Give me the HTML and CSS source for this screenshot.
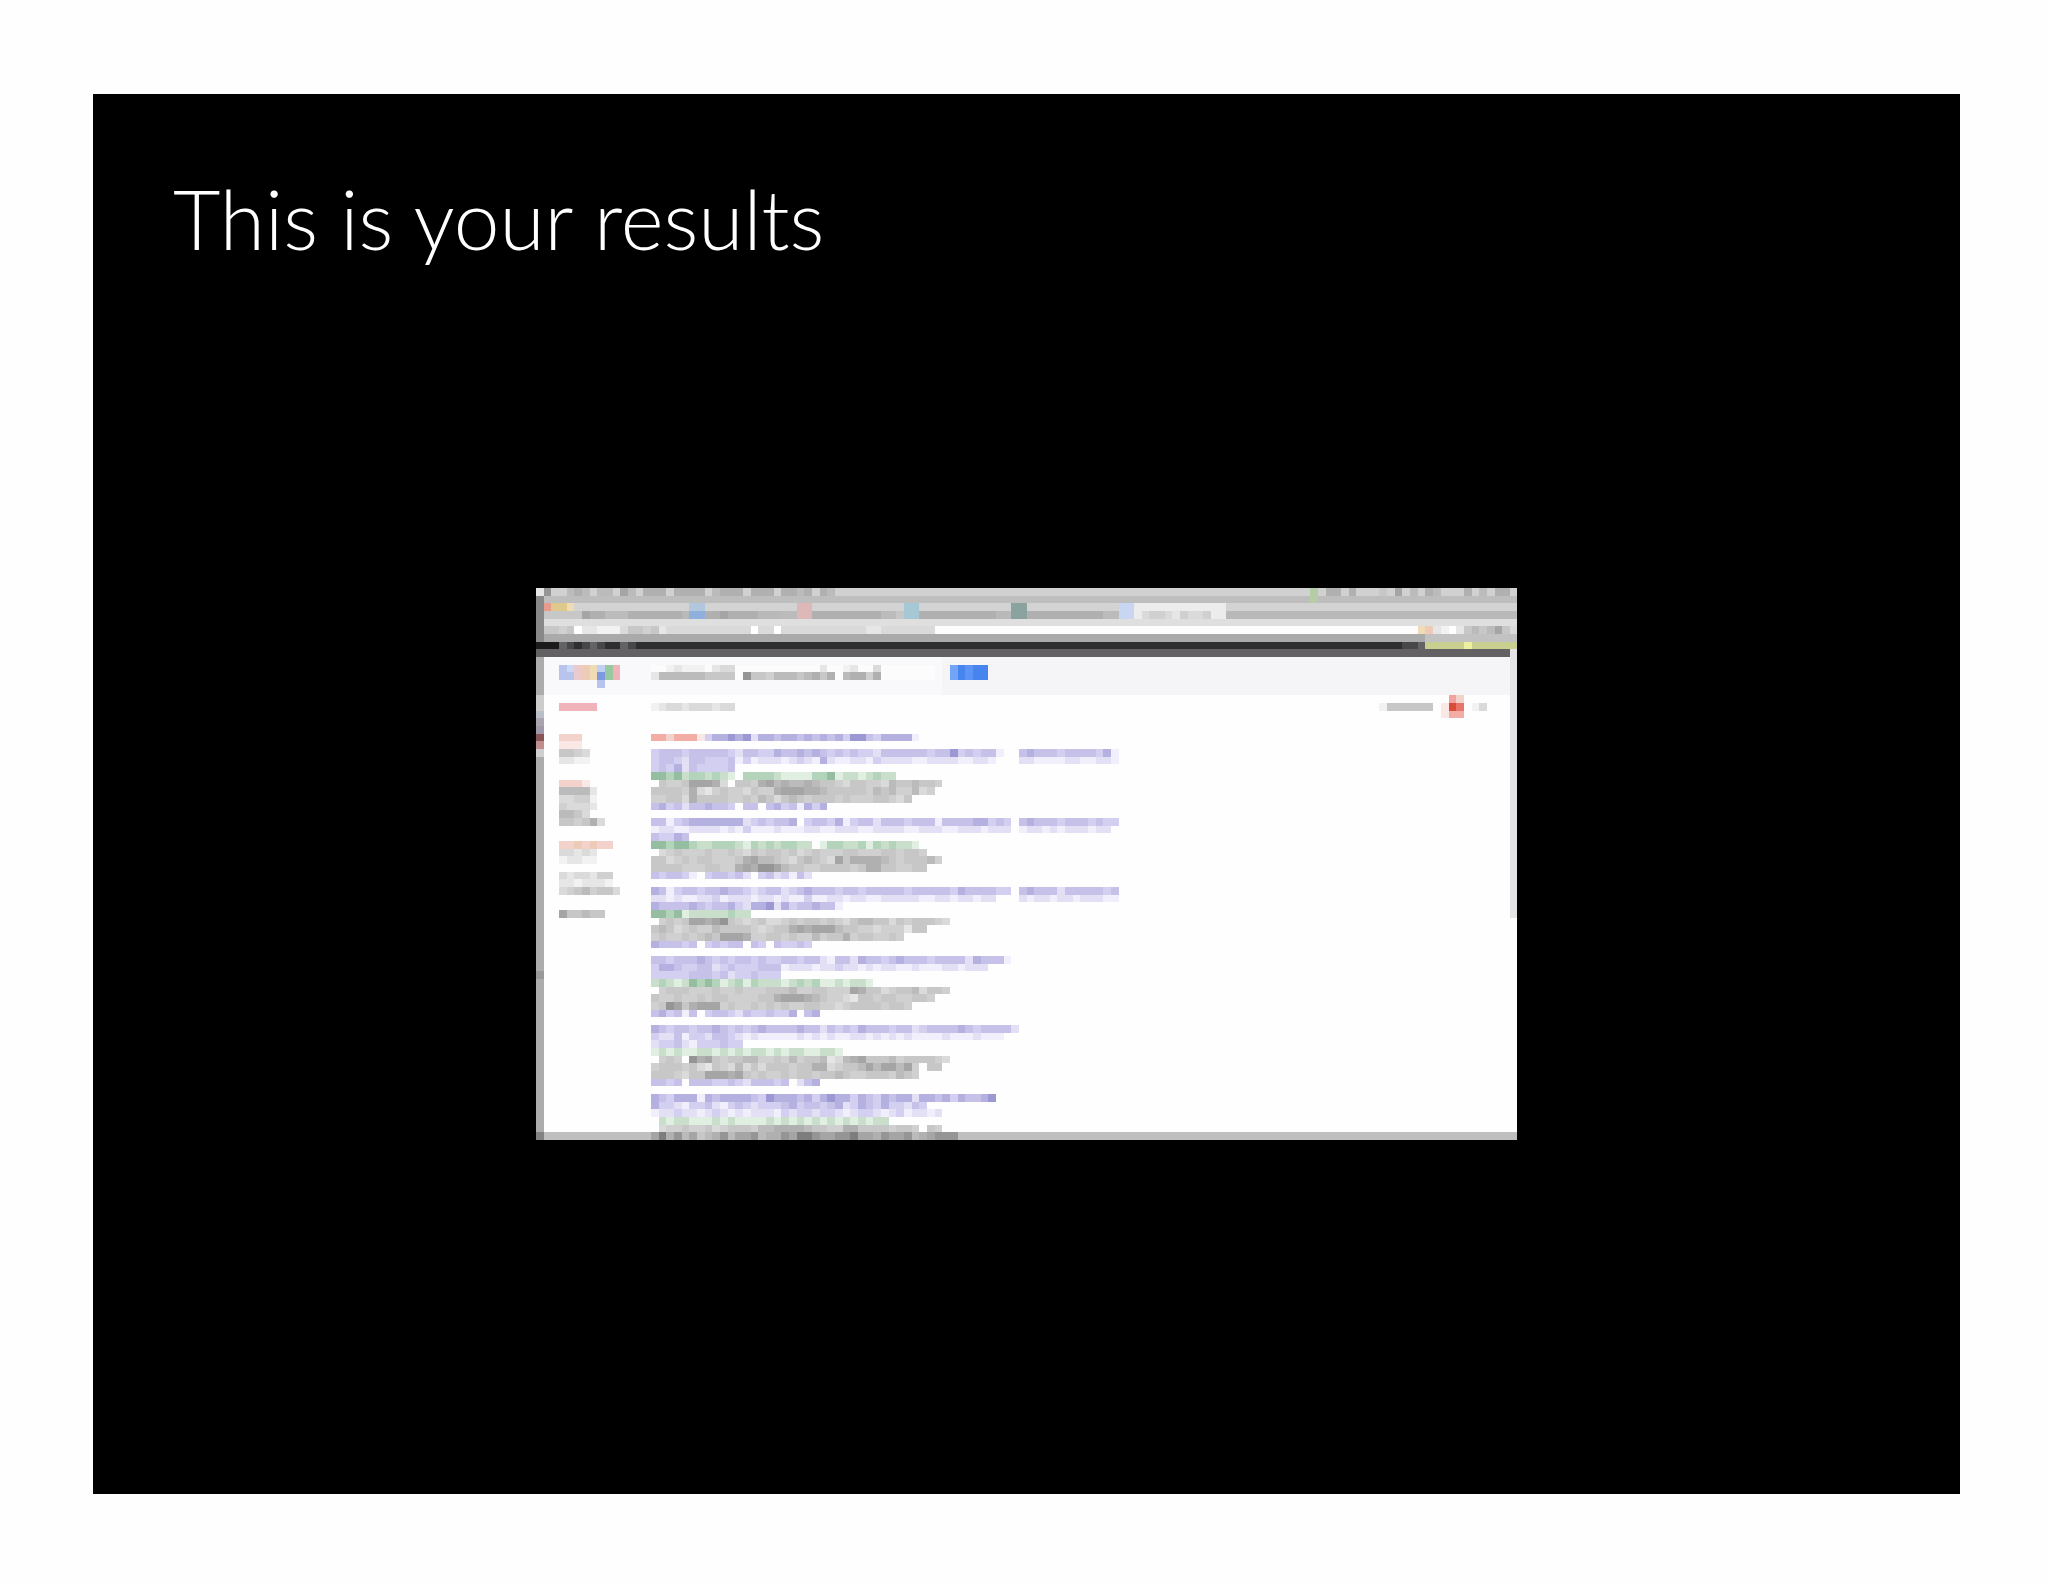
FILE: index.html
```
<!DOCTYPE html>
<html lang="en">
<head>
    <meta charset="UTF-8">
    <meta name="viewport" content="width=device-width, initial-scale=1.0">
    <title>This is your results</title>
    <link rel="stylesheet" href="styles.css">
</head>
<body>
    <main class="slide">
        <h1 class="slide-title">This is your results</h1>
        <svg id="thumb" class="thumb" viewBox="0 0 128 72" preserveAspectRatio="none" role="img" aria-label="Thumbnail of a search results page"></svg>
    </main>

    <script src="thumb.js"></script>
</body>
</html>
```
FILE: styles.css
```
body {
    margin: 0;
    padding: 94px 88px 88px 93px;
    background-color: #fefefe;
    font-family: Lato, "Open Sans", sans-serif;
}
.slide {
    display: flex;
    flex-direction: column;
    align-items: center;
    box-sizing: border-box;
    aspect-ratio: 4 / 3;
    padding: 80px;
    background-color: #000;
}
.slide-title {
    align-self: flex-start;
    margin: 0;
    color: white;
    font-size: 82px;
    font-weight: 300;
    line-height: 88px;
}
.thumb {
    display: block;
    width: 57.5%;
    aspect-ratio: 16 / 9;
    margin-top: 326px;
    shape-rendering: crispEdges;
}
```
FILE: thumb.js
```
const colors = {
    // greys, dark to light
    0: '#7d7d7d', 1: '#959595', 2: '#a5a5a5', 3: '#b0b0b0', 4: '#bbbbbb',
    5: '#c7c7c7', 6: '#d0d0d0', 7: '#dadada', 8: '#e6e6e6', 9: '#f2f2f2',
    // link purples
    a: '#9c98d4', b: '#b4b0e0', c: '#c5c1e8', d: '#d2cff0', e: '#e3e0f6', f: '#f1effb',
    // url greens
    g: '#94be9f', h: '#b3d3bb', i: '#c9dfcc', j: '#e1efe3',
    // reds
    r: '#f2aea4', s: '#f2d2cb', t: '#f9e8e5', p: '#f0b3ba', q: '#f3a39d', R: '#d94c3a', Q: '#e8746a',
    // logo and button
    u: '#b9c4ed', v: '#cad9f8', w: '#eacacc', x: '#eecbb6', y: '#f0dcb4', z: '#7f98e2', m: '#c0d0f4', n: '#98c8a0',
    B: '#4784ee', C: '#73a5f7', D: '#5b94f5',
    // browser chrome
    k: '#1b1b1c', K: '#2e2d2f', l: '#474648', L: '#646264',
    S: '#8fb0dc', T: '#b2c6de', U: '#deb8b8', V: '#a5c8d4', W: '#8ba39e', X: '#c8d6f2',
    Y: '#c9d08f', Z: '#eef0a0', E: '#e79b8c', F: '#dfc88c', G: '#b4cda6', o: '#ffffff'
};

// [x, y, width, height, fill]
const blocks = [
    [0, 0, 128, 72, '#fefefe'],
    [0, 0, 128, 1, '#d1d1d1'],
    [0, 1, 128, 1, '#bebebe'],
    [0, 2, 128, 1, '#d3d3d3'],
    [0, 3, 128, 1, '#b9b9b9'],
    [0, 4, 128, 1, '#dfdfdf'],
    [0, 5, 128, 1, '#dadada'],
    [52, 5, 63, 1, '#fdfdfd'],
    [78, 2, 12, 2, '#ececec'],
    [0, 6, 128, 1, '#aaaaaa'],
    [116, 6, 12, 1, '#c2c2c2'],
    [0, 7, 128, 1, '#2e2d2f'],
    [0, 8, 128, 1, '#636163'],
    [0, 9, 128, 5, '#f5f5f8'],
    [1, 9, 52, 5, '#f9f8fa'],
    [15, 10, 37, 2, '#fcfcfd'],
    [0, 1, 1, 6, '#888888'],
    [0, 9, 1, 62, '#acacac'],
    [0, 14, 1, 2, '#cccccc'],
    [0, 16, 1, 1, '#b8bfc8'],
    [0, 17, 1, 1, '#a8a4ae'],
    [0, 18, 1, 1, '#9f98a8'],
    [0, 19, 1, 1, '#875457'],
    [0, 20, 1, 1, '#c08c8c'],
    [0, 21, 1, 1, '#cfcfd2'],
    [0, 50, 1, 1, '#999999'],
    [127, 8, 1, 35, '#e5e4e6'],
    [0, 71, 128, 1, '#bfbfbf'],
    [0, 71, 1, 1, '#828282']
];

// [x, y, one letter per cell]
const rows = [
    // menu bar
    [0, 0, '81..434.44.24.333.3333.4333.333.3343.34'],
    [101, 0, 'G.33.3...5.2.4.34...3.4.33'],
    [101, 1, 'G'],
    // tabs
    [1, 2, 'EFFy'],
    [20, 2, 'TT'],
    [34, 2, 'UU'],
    [48, 2, 'VV'],
    [62, 2, 'WW'],
    [76, 2, 'XX'],
    [1, 3, '555552334443333333'],
    [20, 3, 'SS3323333'],
    [32, 3, '44UU333333'],
    [42, 3, '333445VV3333333333'],
    [62, 3, 'WW333333333344XX'],
    [79, 3, '766786776'],
    // toolbar
    [1, 5, '5565o88999.55658'],
    [28, 5, 'o..o'],
    [42, 5, '788'],
    [115, 5, 'yx89o8545425444'.slice(0, 12)],
    // dark google bar
    [0, 7, 'kkkLlKlLlKKLl'],
    [113, 7, 'llLYYYYYZYYYYYY'],
    // logo, search box, button
    [3, 10, 'uvwxymnp'],
    [3, 11, 'uuwxyznp'],
    [8, 12, 'u'],
    [17, 10, '98999.877'],
    [37, 10, '8..98'],
    [15, 11, '84444445555.155644454353.4334'],
    [44, 10, '7'],
    [43, 11, '63'],
    [54, 10, 'CBDBB'],
    [54, 11, 'CBDBB'],
    // toolbelt
    [3, 15, 'ppppp'],
    [15, 15, '98778777877'],
    [110, 15, '9555555'],
    [119, 14, 'qs'],
    [118, 15, 'tRQ.97'],
    [118, 16, 'trr'],
    // sidebar
    [3, 19, 'sss'],
    [3, 20, 'ttt'],
    [3, 21, '5567'],
    [3, 22, '8899'],
    [3, 25, 'ssst'],
    [3, 26, '44448'],
    [3, 27, '77669'],
    [3, 28, '67778'],
    [3, 29, '4457'],
    [3, 30, '556537'],
    [3, 33, 'ssxsxss'],
    [3, 34, '77878'],
    [3, 35, '98899'],
    [3, 37, '7877866'],
    [3, 38, '8898889'],
    [3, 39, '76546557'],
    [3, 42, '255455'],
    // notice line
    [15, 19, 'rrsrrrtdbbabaebbcbbcbcbcbdaacdbbbbf'],
    // result 1
    [15, 21, 'dcccdcccccdeccddbccbcbcdcdcddeccccccdccadcdccf'],
    [63, 21, 'cbcccdccccdbf'],
    [15, 22, 'dccdeccdddcfdfeeefedefbeffeefdeeeeffeeeeffeef'],
    [63, 22, 'eeffffeeffeef'],
    [15, 23, 'dcdbecddddc'],
    [15, 24, 'gghgihhihij.hhhhijjjjhhgjiijihii'],
    [15, 25, '.566522237.556324344345567556674554556'],
    [15, 26, '5555637865667566322233455555645466476'],
    [15, 27, '6655735555665645754565556566655675'],
    [15, 28, 'cbdceccbccd.cc.cbdcfbdb'],
    // result 2
    [15, 30, 'ccfdcbbbbbbbedcdccb.dccdbfdccecccdcccfccccbbdcd'],
    [63, 30, 'cbcccdcccdcdd'],
    [15, 31, 'feeffeeeefefdfffefffeeffeeeffeeeeffeeeffeeefeee'],
    [63, 31, 'feefefeeefee'],
    [15, 32, 'cddbc'],
    [15, 33, 'gghgghiihhhijhihihhii.jhhiihjhihiij'],
    [15, 34, '.76566656656756556576566655666556556'],
    [15, 35, '55765655666532445675456725333345655546'],
    [15, 36, '555566655663231124556655556533556655'],
    [15, 37, 'cdccdf.dccdce.dcedfce'],
    // result 3
    [15, 39, 'bcfdccdccbccdedccedcbcccdccdcccccdcccccdbccccdd'],
    [63, 39, 'cbcccecccccdc'],
    [15, 40, 'eefeffeedfeeefeefeffdffeefeeffeeeeeffeefeefee'],
    [63, 40, 'efeefeefeeeff'],
    [15, 41, 'bccccbcdccbdebbaebdccbccf'],
    [15, 42, 'gghgjiiiiihii'],
    [15, 43, '.6565223215676577656556567544557565556'],
    [53, 43, '7'],
    [15, 44, '545765664555567655323222455667666855'],
    [15, 45, '656656545222366556566465536556656'],
    [15, 46, 'bcccdc.dcdcc.cd.cddcd'],
    // result 4
    [15, 48, 'ccdcccbcdcdccdcddccdccefccebccdcbcccdccccebcccf'],
    [15, 49, 'dbbcddccedcdddcccfeeefeedeefefeeffefffeefeee'],
    [15, 50, 'dddddcccdceddcddd'],
    [15, 51, 'ihijighghjihjhiiijihihjjijiij'],
    [15, 52, '.65556665665666555466556662355765547556'],
    [15, 53, '5665665655666655322234566785565566556'],
    [15, 54, '6512532226566565656655667655556556'],
    [15, 55, 'cbdcfc.dccdecddcddb.cb'],
    // result 5
    [15, 57, 'bcdccdccbcdcdcbccccbccecdcdbcccdccedccccbcdcccce'],
    [15, 58, 'deecfddeccdefefffffefefeffeefefefeffffefffefff'],
    [15, 59, 'eddcefdddcdd'],
    [15, 60, 'jijijjiijijijiijijiijjiij'],
    [15, 61, '.656.1325655446656465548743255546555567'],
    [15, 62, '65556578567475755565533765542422426.556'.slice(0, 38)],
    [15, 63, '55567552223256566565565545665556456'],
    [15, 64, 'ccdc.cccddcdecccdc.ecb'],
    // result 6
    [15, 66, 'bcdbbbfbcbbbbcdabbbcbdbabbdbcdbcbbebbcbdbccba'],
    [15, 67, 'bddefddcefdcdedddcbdccdcbedbcdbddecd'],
    [15, 68, 'feedeefedefefeeefdeddeddefeddefedfeefe'],
    [15, 69, '.ijiijjjijijjjjijijijijijijijii'],
    [15, 70, '.7665665765556443333455663355556556.56'],
    [15, 71, '2031425431422143312001221102231221432111']
];

const svg = document.getElementById('thumb');

function addRect(x, y, width, height, fill) {
    const rect = document.createElementNS('http://www.w3.org/2000/svg', 'rect');
    rect.setAttribute('x', x);
    rect.setAttribute('y', y);
    rect.setAttribute('width', width);
    rect.setAttribute('height', height);
    rect.setAttribute('fill', fill);
    svg.appendChild(rect);
}

blocks.forEach(block => addRect(...block));

rows.forEach(([x, y, cells]) => {
    [...cells].forEach((cell, i) => {
        if (cell !== '.') {
            addRect(x + i, y, 1, 1, colors[cell]);
        }
    });
});
```
